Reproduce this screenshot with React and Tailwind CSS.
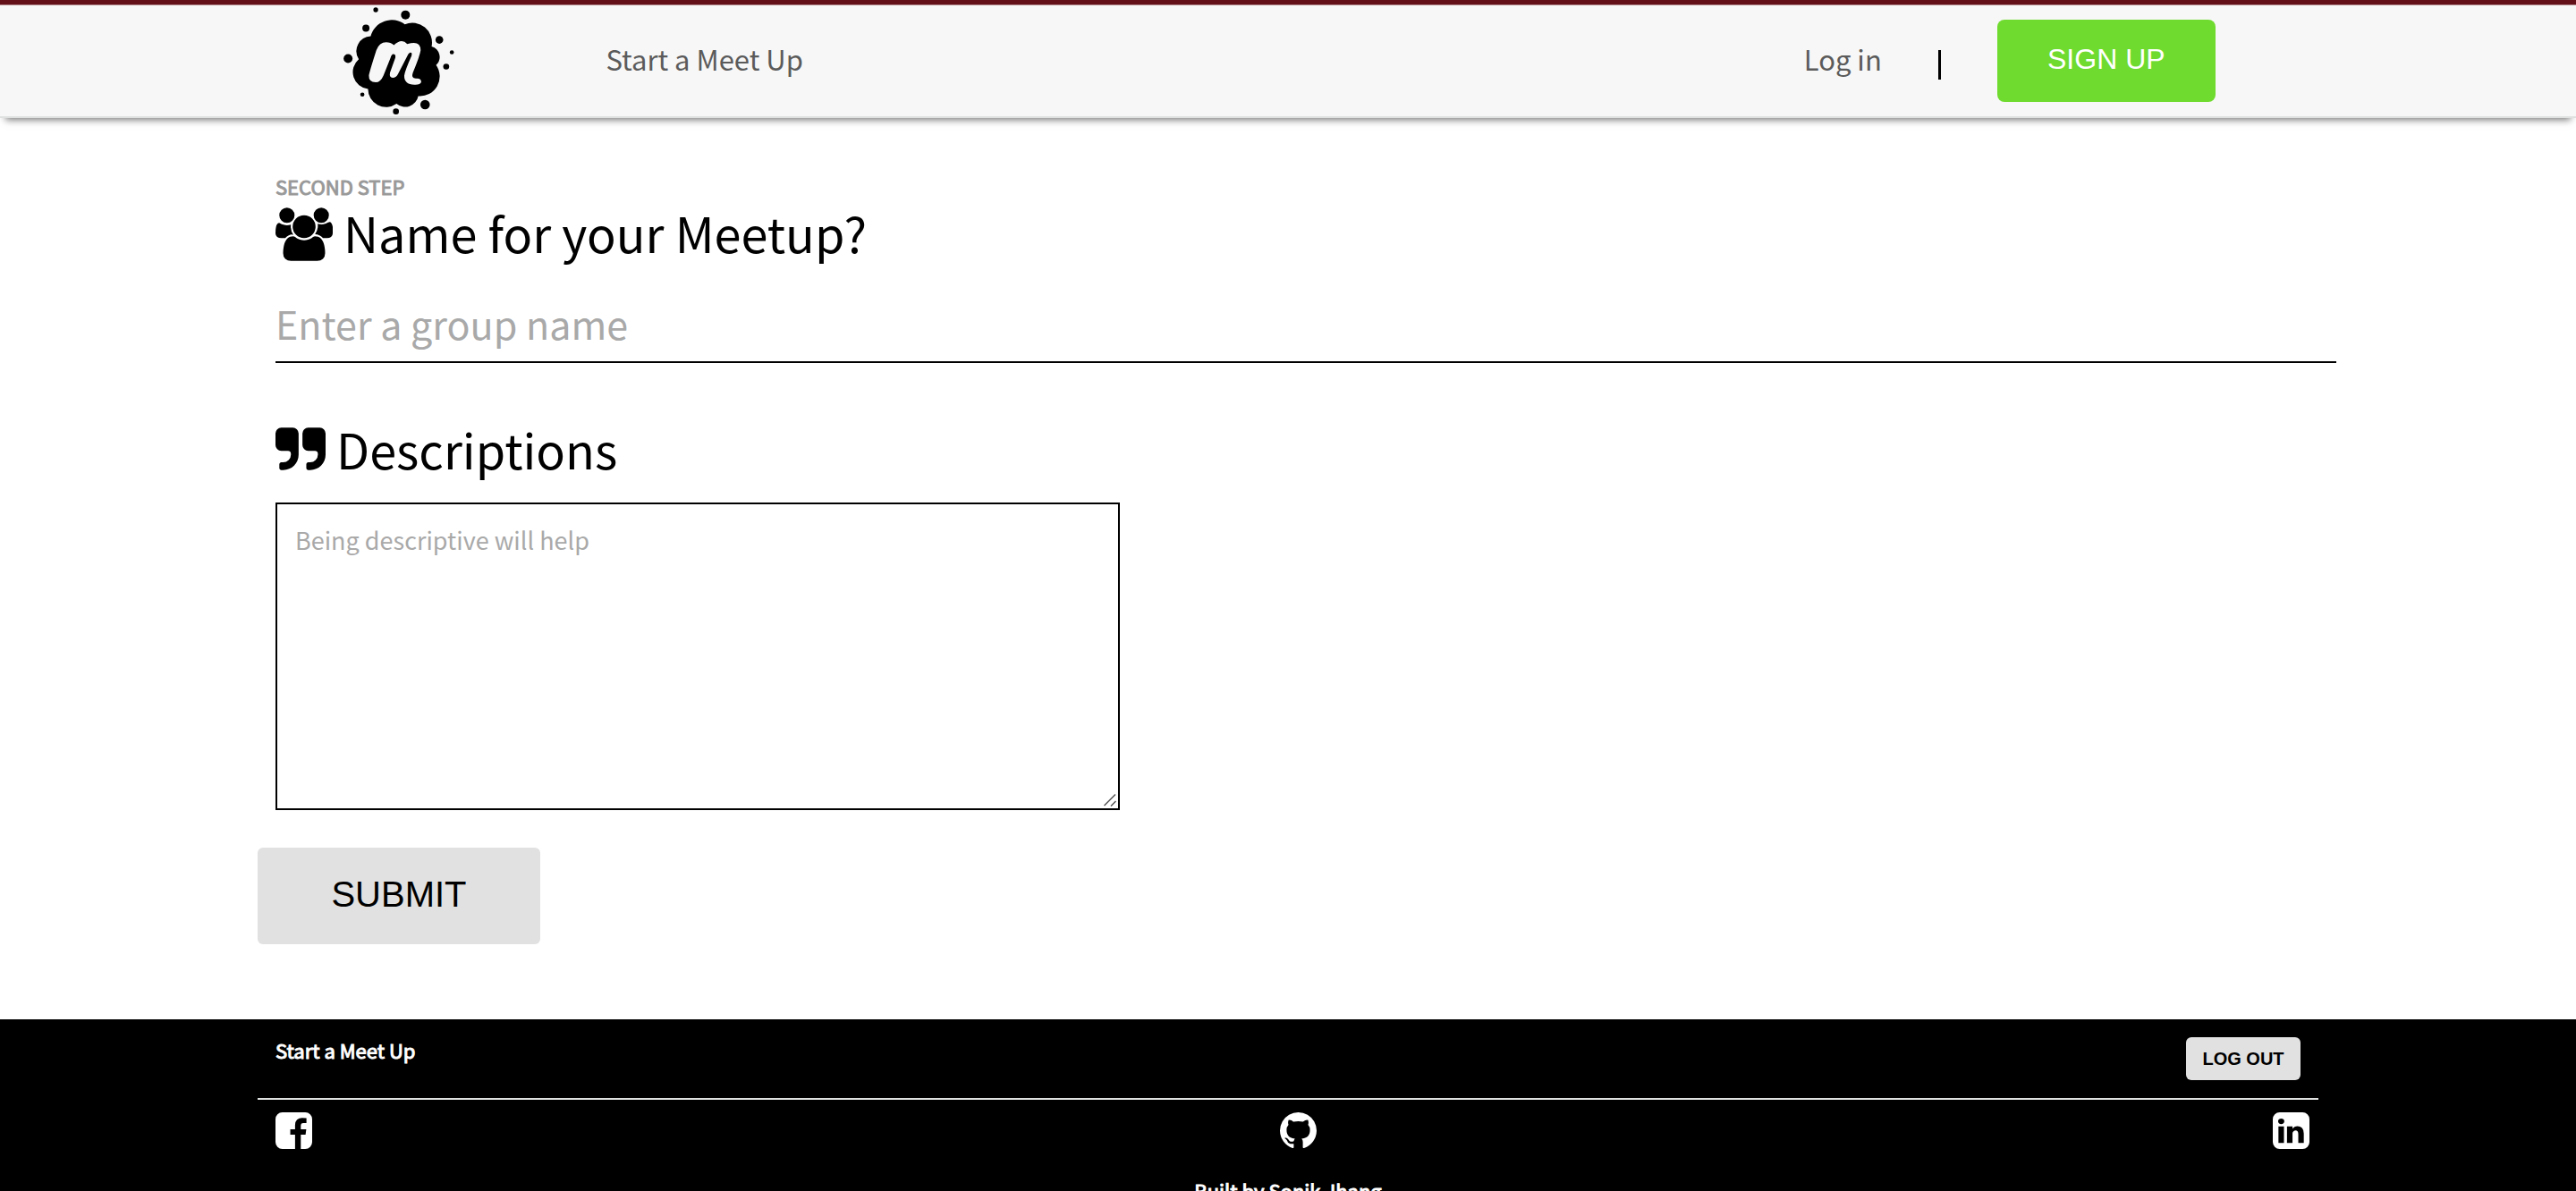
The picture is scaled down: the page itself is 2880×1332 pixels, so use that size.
import React from "react";

function Icon({ viewBox, d, className }) {
  return (
    <svg viewBox={viewBox} fill="currentColor" className={className} aria-hidden="true">
      <path d={d} />
    </svg>
  );
}

const users =
  "M593 640q-162 5-265 128h-134q-82 0-138-40.5t-56-118.5q0-353 124-353 6 0 43.5 21t97.5 42.5 119 21.5q67 0 133-23-5 37-5 66 0 159 93 287zm1071 637q0 120-73 189.5t-194 69.5h-874q-121 0-194-69.5t-73-189.5q0-53 3.5-103.5t14-109 26.5-108.5 43-97.5 62-81 85.5-53.5 111.5-20q10 0 43 21.5t73 48 107 48 135 21.5 135-21.5 107-48 73-48 43-21.5q61 0 111.5 20t85.5 53.5 62 81 43 97.5 26.5 108.5 14 109 3.5 103.5zm-1024-1277q0 106-75 181t-181 75-181-75-75-181 75-181 181-75 181 75 75 181zm704 384q0 159-112.5 271.5t-271.5 112.5-271.5-112.5-112.5-271.5 112.5-271.5 271.5-112.5 271.5 112.5 112.5 271.5zm576 225q0 78-56 118.5t-138 40.5h-134q-103-123-265-128 93-128 93-287 0-29-5-66 66 23 133 23 59 0 119-21.5t97.5-42.5 43.5-21q124 0 124 353zm-128-609q0 106-75 181t-181 75-181-75-75-181 75-181 181-75 181 75 75 181z";
const quote =
  "M768 320v704q0 104-40.5 198.5t-109.5 163.5-163.5 109.5-198.5 40.5h-64q-26 0-45-19t-19-45v-128q0-26 19-45t45-19h64q106 0 181-75t75-181v-32q0-40-28-68t-68-28h-224q-80 0-136-56t-56-136v-384q0-80 56-136t136-56h384q80 0 136 56t56 136zm896 0v704q0 104-40.5 198.5t-109.5 163.5-163.5 109.5-198.5 40.5h-64q-26 0-45-19t-19-45v-128q0-26 19-45t45-19h64q106 0 181-75t75-181v-32q0-40-28-68t-68-28h-224q-80 0-136-56t-56-136v-384q0-80 56-136t136-56h384q80 0 136 56t56 136z";
const facebook =
  "M1248 128q119 0 203.5 84.5t84.5 203.5v960q0 119-84.5 203.5t-203.5 84.5h-188v-595h199l30-232h-229v-148q0-56 23.5-84t91.5-28l122-1v-207q-63-9-178-9-136 0-217.5 80t-81.5 226v171h-200v232h200v595h-532q-119 0-203.5-84.5t-84.5-203.5v-960q0-119 84.5-203.5t203.5-84.5h960z";
const github =
  "M768 128q209 0 385.5 103t279.5 279.5 103 385.5q0 251-146.5 451.5t-378.5 277.5q-27 5-40-7t-13-30q0-3 .5-76.5t.5-134.5q0-97-52-142 57-6 102.5-18t94-39 81-66.5 53-105 20.5-150.5q0-119-79-206 37-91-8-204-28-9-81 11t-92 44l-38 24q-93-26-192-26t-192 26q-16-11-42.5-27t-83.5-38.5-85-13.5q-45 113-8 204-79 87-79 206 0 85 20.5 150t52.5 105 80.5 67 94 39 102.5 18q-39 36-49 103-21 10-45 15t-57 5-65.5-21.5-55.5-62.5q-19-32-48.5-52t-49.5-24l-20-3q-21 0-29 4.5t-5 11.5 9 14 13 12l7 5q22 10 43.5 38t31.5 51l10 23q13 38 44 61.5t67 30 69.5 7 55.5-3.5l23-4q0 38 .5 88.5t.5 54.5q0 18-13 30t-40 7q-232-77-378.5-277.5t-146.5-451.5q0-209 103-385.5t279.5-279.5 385.5-103z";
const linkedin =
  "M237 1414h231v-694h-231v694zm246-908q-1-52-36-86t-93-34-94.5 34-36.5 86q0 51 35.5 85.5t92.5 34.5h1q59 0 95-34.5t36-85.5zm585 908h231v-398q0-154-73-233t-193-79q-136 0-209 117h2v-101h-231q3 66 0 694h231v-388q0-38 7-56 15-35 45-59.5t74-24.5q116 0 116 157v371zm468-998v960q0 119-84.5 203.5t-203.5 84.5h-960q-119 0-203.5-84.5t-84.5-203.5v-960q0-119 84.5-203.5t203.5-84.5h960q119 0 203.5 84.5t84.5 203.5z";

const splashes = [
  [150, 29, 8],
  [250, 46, 15],
  [117, 91, 12],
  [57, 193, 15],
  [364, 130, 13],
  [406, 172, 7],
  [387, 220, 10],
  [105, 314, 7],
  [218, 371, 10],
  [316, 348, 16],
];

function Logo() {
  return (
    <svg viewBox="42 20 372 361" className="h-[120px] w-[124px]" aria-hidden="true">
      {splashes.map(([x, y, r]) => (
        <circle key={x} cx={x} cy={y} r={r} />
      ))}
      <path d="M133 118A73 73 0 0 1 248 78A66 66 0 0 1 338 152A37 37 0 0 1 353 215A66 66 0 0 1 293 319A45 45 0 0 1 220 345A61 61 0 0 1 124 295A57 57 0 0 1 93 195A50 50 0 0 1 133 118Z" />
      <path
        fill="#f7f7f7"
        d="M127 250Q128 240 152 165Q162 138 185 138Q200 138 211 148Q237 123 256 144Q301 130 301 165Q298 185 275 240Q268 258 285 260Q303 258 303 272Q300 282 280 281Q245 280 246 250Q248 235 270 185Q274 172 266 173Q260 174 256 185L225 245Q218 258 207 258Q195 256 198 240L216 190Q218 178 209 178Q203 179 200 190L176 250Q166 273 150 273Q126 272 127 250Z"
      />
    </svg>
  );
}

function Header() {
  return (
    <header className="border-t-5 border-b-2 border-t-[#641019] border-b-[#dfe1e1] bg-[#f7f7f7] shadow-[0_8px_8px_-6px_#777777]">
      <div className="h-px bg-[#b1878b]" />
      <nav className="mr-[14%] ml-[13%] flex h-31 items-center text-[31px] leading-[44px] text-[#5b5b5b]">
        <a href="#home" aria-label="Home" className="ml-2.5 text-black">
          <Logo />
        </a>
        <a href="#start" className="ml-[169px] pb-1">Start a Meet Up</a>
        <a href="#login" className="ml-auto pb-1">Log in</a>
        <span className="mt-2 ml-[63px] h-[33px] w-[3px] bg-black" />
        <button className="ml-[63px] h-[92px] w-[244px] rounded-lg bg-[#70db2f] pb-1 font-['Liberation_Sans',sans-serif] text-[32px] text-white">
          SIGN UP
        </button>
      </nav>
    </header>
  );
}

function GroupForm() {
  return (
    <form className="mx-[10%] pt-[58px] pb-[84px]">
      <div className="ml-5">
        <p className="text-[22px] leading-9 text-[#999999] [-webkit-text-stroke:1px]">SECOND STEP</p>
        <label htmlFor="name" className="flex h-[68px] items-center gap-3 text-[54px] leading-[68px]">
          <Icon viewBox="0 -256 1920 1792" d={users} className="mt-1 h-15 w-16" />
          Name for your Meetup?
        </label>
      </div>
      <input
        id="name"
        placeholder="Enter a group name"
        className="mt-6 ml-5 block h-[88px] w-full border-b-2 border-black text-[43px] outline-none placeholder:text-[#a9a9a9]"
      />
      <div className="mt-15 ml-5">
        <label htmlFor="description" className="flex h-[72px] items-center gap-3 text-[54px] leading-[68px]">
          <Icon viewBox="0 128 1664 1408" d={quote} className="h-12 w-14" />
          Descriptions
        </label>
        <div className="relative mt-6 w-[944px] max-w-full">
          <textarea
            id="description"
            placeholder="Being descriptive will help"
            className="block h-[344px] w-full resize-none border-2 border-black px-5 py-5 text-[27px] leading-10 outline-none placeholder:text-[#a9a9a9]"
          />
          <svg viewBox="0 0 14 14" className="absolute right-1 bottom-1 size-3.5" stroke="#555555" strokeWidth="1.5" aria-hidden="true">
            <path d="M0.5 13 13 0.5M8 13.5 13.5 8" />
          </svg>
        </div>
      </div>
      <button type="button" className="mt-[42px] h-[108px] w-[316px] rounded-md bg-[#e1e1e1] pb-1 font-['Liberation_Sans',sans-serif] text-[40px]">
        SUBMIT
      </button>
    </form>
  );
}

function Footer() {
  return (
    <footer className="bg-black px-[10%] pt-5 text-white">
      <div className="flex items-start justify-between border-b-2 border-[#dfe1e1] px-5 pb-5">
        <a href="#start" className="text-[22px] leading-7 [-webkit-text-stroke:1px]">Start a Meet Up</a>
        <button className="h-12 w-32 rounded-md bg-[#e1e1e1] font-['Liberation_Sans',sans-serif] text-[20px] font-bold text-black">
          LOG OUT
        </button>
      </div>
      <div className="flex justify-between pt-3.5 pr-2.5 pl-5">
        <a href="#facebook" aria-label="Facebook">
          <Icon viewBox="0 128 1536 1536" d={facebook} className="size-[41px]" />
        </a>
        <a href="#github" aria-label="GitHub" className="pl-3">
          <Icon viewBox="0 128 1536 1536" d={github} className="size-[41px]" />
        </a>
        <a href="#linkedin" aria-label="LinkedIn">
          <Icon viewBox="0 128 1536 1536" d={linkedin} className="size-[41px]" />
        </a>
      </div>
      <p className="mt-8 text-center text-[22px] leading-7 [-webkit-text-stroke:1px]">Built by Sonik Jhang</p>
    </footer>
  );
}

export default function App() {
  return (
    <div className="h-screen overflow-hidden bg-white font-['Noto_Sans_CJK_SC',sans-serif] text-black">
      <Header />
      <main>
        <GroupForm />
      </main>
      <Footer />
    </div>
  );
}
